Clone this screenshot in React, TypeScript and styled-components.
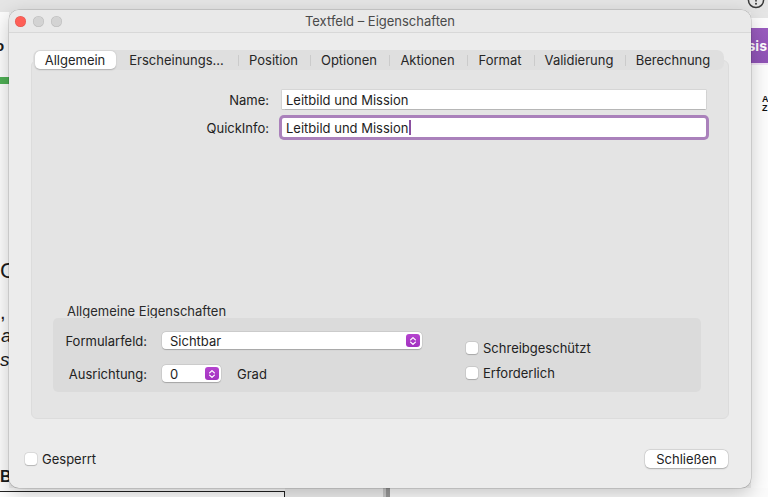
import styled, { createGlobalStyle } from "styled-components";

const GlobalStyle = createGlobalStyle`
  html, body { margin: 0; padding: 0; }
  body {
    font-family: Inter, "Noto Sans", "Liberation Sans", sans-serif;
    background: #e6e6e6;
    -webkit-font-smoothing: antialiased;
  }
`;

const Desktop = styled.div`
  position: relative;
  width: 768px;
  height: 497px;
  overflow: hidden;
  display: grid;
  grid-template-rows: 12px 1fr 9px;
  background: #e6e6e6;
`;

/* ---------- background app ---------- */

const TopStrip = styled.div`
  display: flex;
  justify-content: flex-end;
  padding-right: 3px;
  background: #e5e5e5;
`;

const InfoIcon = styled.svg`
  margin-top: -9px;
`;

const MiddleRow = styled.div`
  display: grid;
  grid-template-columns: 9px 1fr 17px;
`;

const DocPane = styled.div`
  background: #fcfcfc;
  overflow: hidden;
  display: flex;
  flex-direction: column;
  font-family: "Liberation Sans", sans-serif;
  color: #1b1b1b;
`;

const DocLine = styled.div<{ $top: number; $size: number; $bold?: boolean; $italic?: boolean; $shift?: number }>`
  margin-top: ${(p) => p.$top}px;
  margin-left: ${(p) => p.$shift ?? 0}px;
  font-size: ${(p) => p.$size}px;
  line-height: 1;
  font-weight: ${(p) => (p.$bold ? 700 : 400)};
  font-style: ${(p) => (p.$italic ? "italic" : "normal")};
  white-space: nowrap;
`;

const GreenBar = styled.div`
  margin-top: 24px;
  height: 7px;
  background: #4faf55;
`;

const Gutter = styled.div`
  background: #ececec;
`;

const Sidebar = styled.div`
  margin-top: 6px;
  background: #fdfdfd;
  overflow: hidden;
  display: flex;
  flex-direction: column;
`;

const PurpleButton = styled.div`
  margin-top: 10px;
  height: 35px;
  background: linear-gradient(#9a5cbf, #8f53b6);
  color: #fff;
  font-weight: 700;
  font-size: 14px;
  display: flex;
  align-items: center;
  justify-content: flex-end;
  padding-right: 1px;
  border-bottom: 2px solid #f1e4f5;
`;

const SideText = styled.div<{ $top: number }>`
  margin-top: ${(p) => p.$top}px;
  padding-left: 11px;
  font-family: "Liberation Sans", sans-serif;
  font-weight: 700;
  font-size: 9px;
  line-height: 9px;
  color: #111;
  white-space: nowrap;
`;

const BottomRow = styled.div`
  display: grid;
  grid-template-columns: 285px 98px 3px 4px 1fr;
  background: #fafafa;
`;

const BottomBox = styled.div`
  margin-top: 3px;
  border-top: 1px solid #222;
  border-right: 1px solid #222;
  background: #fff;
`;

const BottomGap = styled.div<{ $tone: string }>`
  background: ${(p) => p.$tone};
`;

/* ---------- dialog window ---------- */

const Dialog = styled.div`
  position: absolute;
  left: 9px;
  top: 10px;
  width: 742px;
  height: 478px;
  border-radius: 10px;
  background: #ececec;
  box-shadow: 0 0 0 0.5px rgba(0, 0, 0, 0.22), 0 6px 20px rgba(0, 0, 0, 0.22);
  display: flex;
  flex-direction: column;
  overflow: hidden;
`;

const TitleBar = styled.div`
  position: relative;
  height: 22px;
  display: flex;
  align-items: center;
  gap: 7px;
  padding-left: 6px;
  background: #e9e9e9;
  border-bottom: 1px solid #d8d8d8;
`;

const Light = styled.span<{ $color: string }>`
  width: 11px;
  height: 11px;
  border-radius: 50%;
  background: ${(p) => p.$color};
  box-shadow: inset 0 0 0 0.5px rgba(0, 0, 0, 0.12);
`;

const Title = styled.div`
  position: absolute;
  left: 0;
  right: 0;
  text-align: center;
  font-size: 13px;
  color: #4a4a4a;
  pointer-events: none;
`;

const Body = styled.div`
  flex: 1;
  display: flex;
  flex-direction: column;
  padding: 17px 22px 0;
`;

const TabBar = styled.div`
  position: relative;
  z-index: 1;
  align-self: center;
  display: flex;
  padding: 1px 2px;
  border-radius: 7px;
  background: #dfdfdf;
  margin-left: -4px;
`;

const Tab = styled.div<{ $w: number; $active?: boolean; $sep?: boolean }>`
  position: relative;
  width: ${(p) => p.$w}px;
  height: 18px;
  display: flex;
  align-items: center;
  justify-content: center;
  font-size: 13px;
  color: #262626;
  white-space: nowrap;
  border-radius: 5px;
  background: ${(p) => (p.$active ? "#ffffff" : "transparent")};
  box-shadow: ${(p) => (p.$active ? "0 0.5px 1.5px rgba(0,0,0,0.22)" : "none")};

  &::before {
    content: "";
    display: ${(p) => (p.$sep ? "block" : "none")};
    position: absolute;
    left: 0;
    top: 4px;
    height: 11px;
    width: 1px;
    background: #cbcbcb;
  }
`;

const Panel = styled.div`
  margin-top: -10px;
  height: 359px;
  box-sizing: border-box;
  border-radius: 6px;
  background: #e4e4e4;
  border: 1px solid #dcdcdc;
  display: flex;
  flex-direction: column;
  padding: 29px 22px 26px 0;
`;

const FieldGrid = styled.div`
  display: grid;
  grid-template-columns: 237px 1fr;
  column-gap: 13px;
  row-gap: 9px;
  align-items: center;
`;

const FieldLabel = styled.label`
  text-align: right;
  font-size: 13px;
  color: #222;
`;

const TextInput = styled.div<{ $focused?: boolean }>`
  height: 19px;
  display: flex;
  align-items: center;
  padding-left: 4px;
  background: #fff;
  font-size: 13px;
  color: #1e1e1e;
  box-shadow: ${(p) =>
    p.$focused
      ? "0 0 0 3px rgba(160, 112, 180, 0.85)"
      : "0 0 0 0.5px rgba(0,0,0,0.12), 0 0.5px 1px rgba(0,0,0,0.15)"};
  border-radius: ${(p) => (p.$focused ? "2px" : "0")};
`;

const Caret = styled.span`
  display: inline-block;
  width: 1.5px;
  height: 15px;
  margin-left: 1px;
  background: #8a4fa0;
`;

const GroupSection = styled.div`
  margin-top: auto;
  margin-left: 21px;
  margin-right: 5px;
  display: flex;
  flex-direction: column;
`;

const GroupTitle = styled.div`
  padding-left: 14px;
  font-size: 13px;
  line-height: 14px;
  color: #2a2a2a;
  margin-bottom: 0;
`;

const GroupBox = styled.div`
  height: 74px;
  box-sizing: border-box;
  border-radius: 5px;
  background: #dbdbdb;
  display: flex;
  padding-top: 14px;
`;

const GroupGrid = styled.div`
  display: grid;
  grid-template-columns: 94px auto;
  column-gap: 15px;
  row-gap: 16px;
  align-items: center;
  align-content: start;
`;

const GroupLabel = styled.label`
  text-align: right;
  font-size: 13px;
  color: #222;
`;

const SelectBox = styled.div<{ $w: number }>`
  width: ${(p) => p.$w}px;
  height: 17px;
  box-sizing: border-box;
  display: flex;
  align-items: center;
  justify-content: space-between;
  padding: 0 2px 0 8px;
  background: #fff;
  border-radius: 4px;
  box-shadow: 0 0 0 0.5px rgba(0,0,0,0.1), 0 0.5px 1px rgba(0,0,0,0.2);
  font-size: 13px;
  color: #1e1e1e;
`;

const StepperRow = styled.div`
  display: flex;
  align-items: center;
  gap: 16px;
  font-size: 13px;
  color: #222;
`;

const PurpleArrows = styled.span`
  width: 14px;
  height: 13px;
  border-radius: 3px;
  background: linear-gradient(#b544cf, #a232c0);
  display: flex;
  align-items: center;
  justify-content: center;
`;

const CheckColumn = styled.div`
  margin-left: 44px;
  padding-top: 8px;
  display: flex;
  flex-direction: column;
  gap: 9px;
`;

const CheckRow = styled.label`
  display: flex;
  align-items: center;
  gap: 5px;
  font-size: 13px;
  line-height: 16px;
  color: #222;
`;

const CheckBox = styled.span`
  width: 12px;
  height: 12px;
  border-radius: 3px;
  background: #fff;
  box-shadow: 0 0 0 0.5px rgba(0,0,0,0.12), 0 0.5px 1px rgba(0,0,0,0.18);
`;

const Footer = styled.div`
  margin-top: 31px;
  display: flex;
  align-items: center;
  justify-content: space-between;
  padding: 0 1px 0 0;
  margin-left: -6px;
`;

const PushButton = styled.button`
  width: 83px;
  height: 18px;
  padding: 0;
  border: none;
  border-radius: 5px;
  background: #fff;
  box-shadow: 0 0 0 0.5px rgba(0,0,0,0.12), 0 0.5px 1.5px rgba(0,0,0,0.22);
  font-family: inherit;
  font-size: 13px;
  color: #222;
`;

const Arrows = () => (
  <svg width="8" height="10" viewBox="0 0 8 10">
    <path
      d="M1.6 3.9 L4 1.6 L6.4 3.9 M1.6 6.1 L4 8.4 L6.4 6.1"
      stroke="#fff"
      strokeWidth="1.3"
      fill="none"
      strokeLinecap="round"
      strokeLinejoin="round"
    />
  </svg>
);

const tabs = [
  { label: "Allgemein", w: 81 },
  { label: "Erscheinungs...", w: 122 },
  { label: "Position", w: 72 },
  { label: "Optionen", w: 79 },
  { label: "Aktionen", w: 78 },
  { label: "Format", w: 67 },
  { label: "Validierung", w: 91 },
  { label: "Berechnung", w: 97 },
];

export default function App() {
  return (
    <>
      <GlobalStyle />
      <Desktop>
        <TopStrip>
          <InfoIcon width="18" height="18" viewBox="0 0 18 18">
            <circle cx="9" cy="9" r="7.6" fill="none" stroke="#3a3a3a" strokeWidth="1.5" />
            <path d="M9 4.5 V10" stroke="#3a3a3a" strokeWidth="1.6" strokeLinecap="round" />
            <circle cx="9" cy="12.8" r="1" fill="#3a3a3a" />
          </InfoIcon>
        </TopStrip>

        <MiddleRow>
          <DocPane>
            <DocLine $top={26} $size={15} $bold $shift={-5}>o</DocLine>
            <GreenBar />
            <DocLine $top={176} $size={22} $shift={0}>C</DocLine>
            <DocLine $top={20} $size={20} $shift={0}>,</DocLine>
            <DocLine $top={4} $size={19} $italic $shift={1}>a</DocLine>
            <DocLine $top={5} $size={19} $italic $shift={0}>s'</DocLine>
            <DocLine $top={100} $size={16} $bold $shift={0}>Bı</DocLine>
          </DocPane>
          <Gutter />
          <Sidebar>
            <PurpleButton>ssis</PurpleButton>
            <SideText $top={30}>A</SideText>
            <SideText $top={0}>Z</SideText>
          </Sidebar>
        </MiddleRow>

        <BottomRow>
          <BottomBox />
          <BottomGap $tone="#eeeeee" />
          <BottomGap $tone="#c9c9c9" />
          <BottomGap $tone="#9a9a9a" />
          <BottomGap $tone="#fbfbfb" />
        </BottomRow>

        <Dialog>
          <TitleBar>
            <Light $color="#fe5f57" />
            <Light $color="#d3d3d3" />
            <Light $color="#d3d3d3" />
            <Title>Textfeld – Eigenschaften</Title>
          </TitleBar>

          <Body>
            <TabBar>
              {tabs.map((t, i) => (
                <Tab key={t.label} $w={t.w} $active={i === 0} $sep={i > 1}>
                  {t.label}
                </Tab>
              ))}
            </TabBar>

            <Panel>
              <FieldGrid>
                <FieldLabel>Name:</FieldLabel>
                <TextInput>Leitbild und Mission</TextInput>
                <FieldLabel>QuickInfo:</FieldLabel>
                <TextInput $focused>
                  Leitbild und Mission
                  <Caret />
                </TextInput>
              </FieldGrid>

              <GroupSection>
                <GroupTitle>Allgemeine Eigenschaften</GroupTitle>
                <GroupBox>
                  <GroupGrid>
                    <GroupLabel>Formularfeld:</GroupLabel>
                    <SelectBox $w={260}>
                      Sichtbar
                      <PurpleArrows>
                        <Arrows />
                      </PurpleArrows>
                    </SelectBox>
                    <GroupLabel>Ausrichtung:</GroupLabel>
                    <StepperRow>
                      <SelectBox $w={59}>
                        0
                        <PurpleArrows>
                          <Arrows />
                        </PurpleArrows>
                      </SelectBox>
                      Grad
                    </StepperRow>
                  </GroupGrid>
                  <CheckColumn>
                    <CheckRow>
                      <CheckBox />
                      Schreibgeschützt
                    </CheckRow>
                    <CheckRow>
                      <CheckBox />
                      Erforderlich
                    </CheckRow>
                  </CheckColumn>
                </GroupBox>
              </GroupSection>
            </Panel>

            <Footer>
              <CheckRow>
                <CheckBox />
                Gesperrt
              </CheckRow>
              <PushButton>Schließen</PushButton>
            </Footer>
          </Body>
        </Dialog>
      </Desktop>
    </>
  );
}
